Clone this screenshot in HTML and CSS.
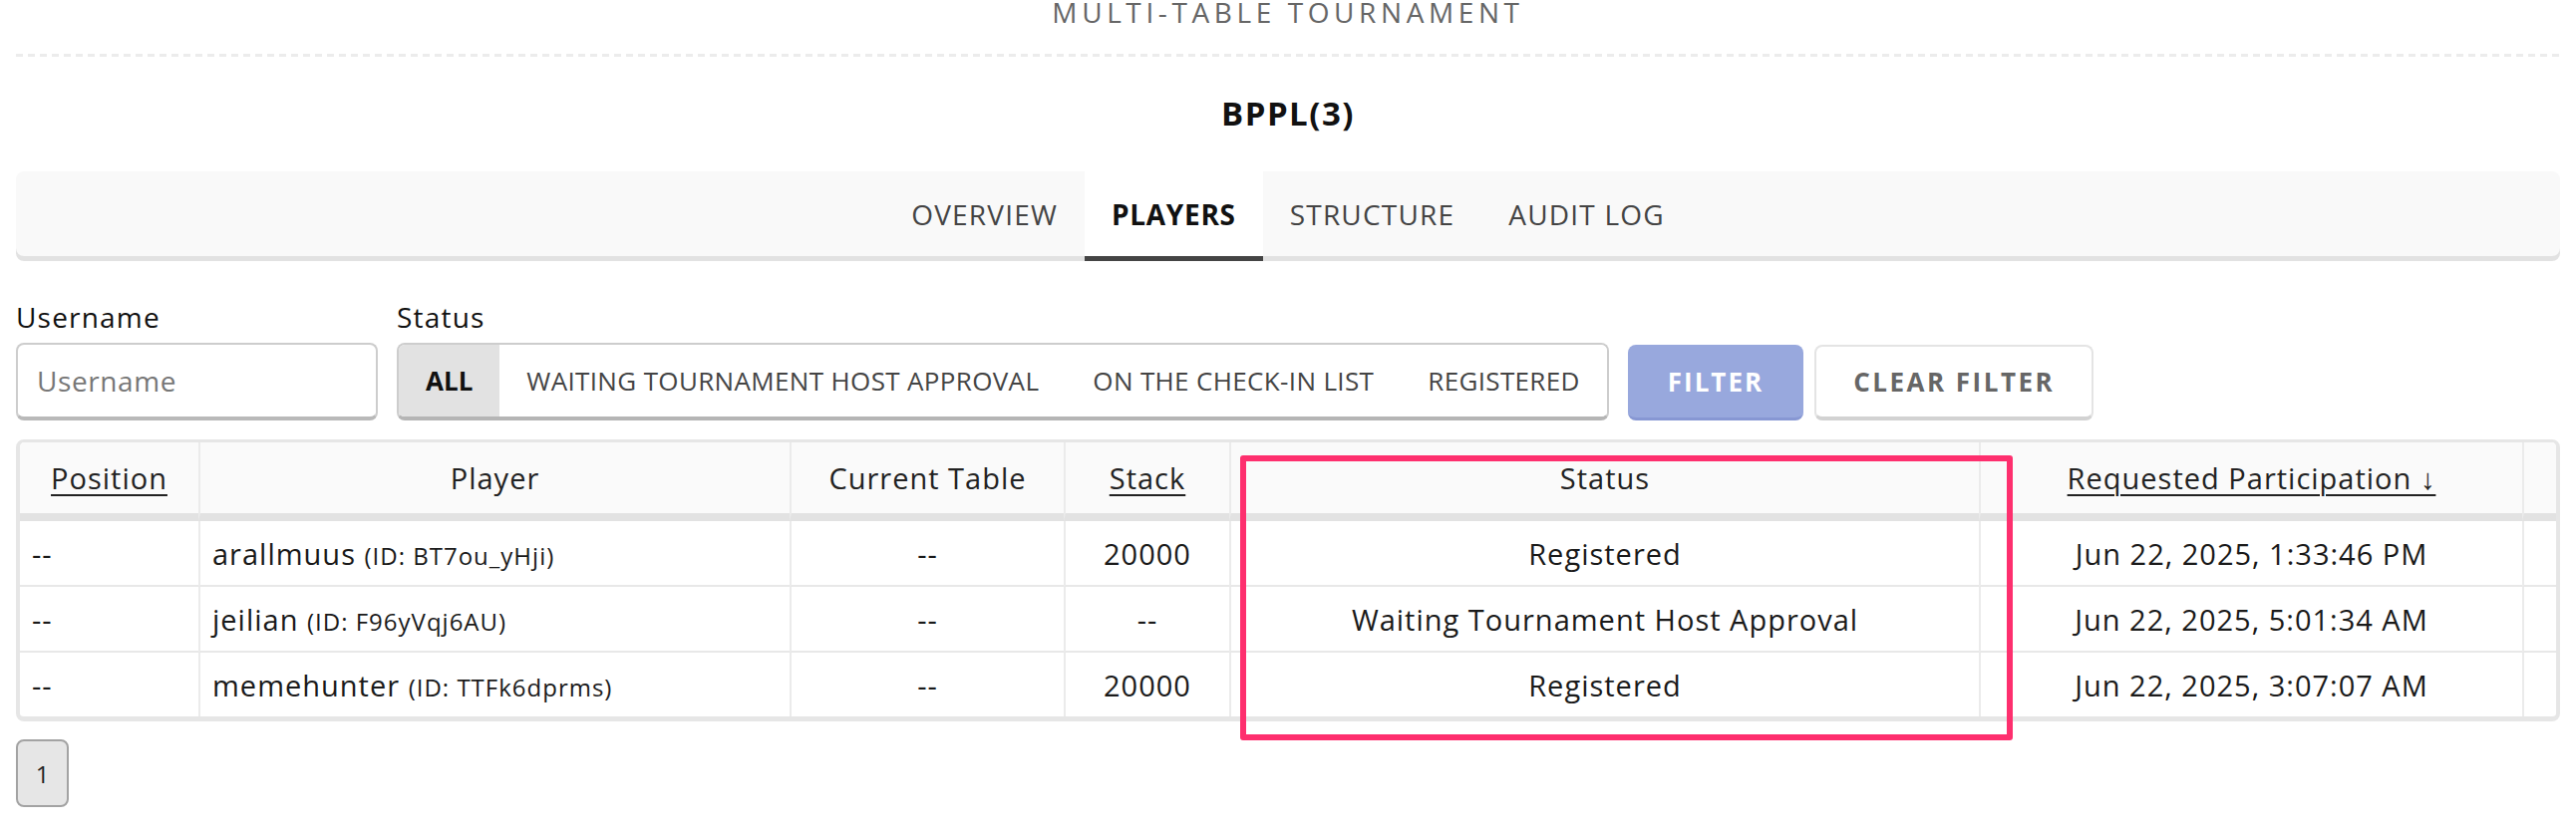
FILE: index.html
```html
<!DOCTYPE html>
<html lang="en">
<head>
    <meta charset="UTF-8">
    <meta name="viewport" content="width=device-width, initial-scale=1.0">
    <title>BPPL(3) - Players</title>
    <link rel="stylesheet" href="styles.css">
</head>
<body>

<div class="page">
    <div class="kicker">MULTI-TABLE TOURNAMENT</div>
    <div class="dots"></div>
    <h1 class="title">BPPL(3)</h1>

    <nav class="tabs">
        <a class="tab">OVERVIEW</a>
        <a class="tab active">PLAYERS</a>
        <a class="tab">STRUCTURE</a>
        <a class="tab">AUDIT LOG</a>
    </nav>

    <div class="filters">
        <div class="field field-user">
            <label for="username">Username</label>
            <input type="text" id="username" placeholder="Username">
        </div>
        <div class="field">
            <label>Status</label>
            <div class="segments">
                <button class="seg active">ALL</button>
                <button class="seg">WAITING TOURNAMENT HOST APPROVAL</button>
                <button class="seg">ON THE CHECK-IN LIST</button>
                <button class="seg">REGISTERED</button>
            </div>
        </div>
        <div class="actions">
            <button class="btn btn-filter" disabled>FILTER</button>
            <button class="btn btn-clear">CLEAR FILTER</button>
        </div>
    </div>

    <div class="table-area">
        <div class="table-wrap">
            <table id="playerTable">
                <colgroup>
                    <col class="c-pos">
                    <col class="c-player">
                    <col class="c-table">
                    <col class="c-stack">
                    <col class="c-status">
                    <col class="c-req">
                    <col class="c-extra">
                </colgroup>
                <thead>
                <tr>
                    <th><span class="sortable">Position</span></th>
                    <th>Player</th>
                    <th>Current Table</th>
                    <th><span class="sortable">Stack</span></th>
                    <th>Status</th>
                    <th><span class="sortable">Requested Participation ↓</span></th>
                    <th></th>
                </tr>
                </thead>
                <tbody>
                </tbody>
            </table>
        </div>
        <div class="highlight"></div>
    </div>

    <div class="pager">
        <button class="page-btn">1</button>
    </div>
</div>

<script>
    const players = [
        { name: 'arallmuus', id: 'BT7ou_yHji', stack: '20000', status: 'Registered', requested: 'Jun 22, 2025, 1:33:46 PM' },
        { name: 'jeilian', id: 'F96yVqj6AU', stack: '--', status: 'Waiting Tournament Host Approval', requested: 'Jun 22, 2025, 5:01:34 AM' },
        { name: 'memehunter', id: 'TTFk6dprms', stack: '20000', status: 'Registered', requested: 'Jun 22, 2025, 3:07:07 AM' }
    ];

    function displayPlayers() {
        const body = document.querySelector('#playerTable tbody');
        body.innerHTML = '';
        players.forEach(player => {
            const row = document.createElement('tr');
            row.innerHTML =
                '<td class="left">--</td>' +
                '<td class="left">' + player.name + ' <span class="pid">(ID: ' + player.id + ')</span></td>' +
                '<td>--</td>' +
                '<td>' + player.stack + '</td>' +
                '<td>' + player.status + '</td>' +
                '<td>' + player.requested + '</td>' +
                '<td></td>';
            body.appendChild(row);
        });
    }

    displayPlayers();
</script>
</body>
</html>
```

FILE: styles.css
```css
body {
    margin: 0;
    font-family: "Open Sans", Arial, sans-serif;
    letter-spacing: 1px;
    color: #222;
    background: #fff;
}
.page {
    padding: 0 16px;
}
.kicker {
    margin-top: -4px;
    font-size: 28px;
    line-height: 32px;
    letter-spacing: 4.6px;
    color: #666;
    text-align: center;
}
.dots {
    margin-top: 26px;
    height: 3px;
    background: repeating-linear-gradient(to right, #ececec 0 7px, transparent 7px 12px);
}
.title {
    margin: 37px 0 0;
    font-size: 33px;
    line-height: 40px;
    font-weight: 700;
    letter-spacing: 1.5px;
    color: #111;
    text-align: center;
}

/* tabs */
.tabs {
    margin-top: 38px;
    height: 85px;
    display: flex;
    justify-content: center;
    background: #f9f9f9;
    border-radius: 8px;
    box-shadow: 0 5px 0 #e2e2e2;
}
.tab {
    padding: 2px 27px 0;
    font-size: 28px;
    line-height: 83px;
    letter-spacing: 1.2px;
    color: #444;
    cursor: pointer;
}
.tab.active {
    background: #fff;
    color: #111;
    font-weight: 700;
    letter-spacing: 0.7px;
    box-shadow: 0 5px 0 #444;
}

/* filter row */
.filters {
    margin-top: 43px;
    display: flex;
    align-items: flex-end;
    gap: 19px;
}
.field label {
    display: block;
    font-size: 28px;
    line-height: 36px;
    letter-spacing: 1.2px;
    margin-bottom: 8px;
    color: #111;
}
.field-user input {
    box-sizing: border-box;
    width: 363px;
    height: 78px;
    padding: 0 19px;
    border: 2px solid #cdcdcd;
    border-bottom: 4px solid #b9b9b9;
    border-radius: 8px;
    font-family: inherit;
    font-size: 28px;
    letter-spacing: 0.6px;
    color: #222;
    outline: none;
}
.field-user input::placeholder {
    color: #777;
}
.segments {
    box-sizing: border-box;
    height: 78px;
    display: flex;
    border: 2px solid #cdcdcd;
    border-bottom: 4px solid #b5b5b5;
    border-radius: 8px;
    overflow: hidden;
}
.seg {
    padding: 0 27px;
    border: none;
    background: #fff;
    font-family: inherit;
    font-size: 26px;
    letter-spacing: 0.35px;
    color: #444;
    cursor: pointer;
}
.seg.active {
    background: #e2e2e2;
    color: #111;
    font-weight: 700;
    letter-spacing: 0;
}
.actions {
    display: flex;
    gap: 11px;
}
.btn {
    box-sizing: border-box;
    height: 76px;
    border-radius: 8px;
    font-family: inherit;
    font-size: 26px;
    font-weight: 700;
    cursor: pointer;
}
.btn-filter {
    padding: 0 40px;
    border: none;
    border-bottom: 3px solid #8797d3;
    background: #98a8dd;
    color: #fff;
    letter-spacing: 2px;
}
.btn-clear {
    padding: 0 37px;
    border: 2px solid #e4e4e4;
    border-bottom: 4px solid #d2d2d2;
    background: #fff;
    color: #666;
    letter-spacing: 2.5px;
}

/* table */
.table-area {
    position: relative;
    margin-top: 19px;
}
.table-wrap {
    border: 4px solid #e6e6e6;
    border-top-width: 3px;
    border-bottom-width: 5px;
    border-radius: 8px;
    overflow: hidden;
}
table {
    width: 100%;
    table-layout: fixed;
    border-collapse: separate;
    border-spacing: 0;
    font-size: 29px;
    letter-spacing: 1px;
}
.c-pos { width: 179px; }
.c-player { width: 593px; }
.c-table { width: 275px; }
.c-stack { width: 166px; }
.c-status { width: 752px; }
.c-req { width: 545px; }
th, td {
    padding: 0 12px;
    text-align: center;
    font-weight: 400;
    border-left: 2px solid #ebebeb;
    white-space: nowrap;
}
th:first-child, td:first-child {
    border-left: none;
}
th {
    height: 71px;
    background: #fafafa;
    color: #222;
    border-bottom: 8px solid #e2e2e2;
}
td {
    height: 64px;
    color: #1a1a1a;
    border-bottom: 2px solid #e8e8e8;
}
tbody tr:last-child td {
    border-bottom: none;
}
td.left {
    text-align: left;
}
.sortable {
    text-decoration: underline;
    text-decoration-thickness: 2px;
    text-underline-offset: 5px;
}
.pid {
    font-size: 24px;
}
.highlight {
    position: absolute;
    left: 1228px;
    top: 16px;
    width: 775px;
    height: 286px;
    box-sizing: border-box;
    border: 6px solid #fe2f6e;
    border-radius: 3px;
}

/* pager */
.pager {
    margin-top: 18px;
}
.page-btn {
    width: 53px;
    height: 68px;
    border: 2px solid #a3a3a3;
    border-radius: 8px;
    background: #e6e6e6;
    font-family: inherit;
    font-size: 24px;
    color: #222;
}
```
